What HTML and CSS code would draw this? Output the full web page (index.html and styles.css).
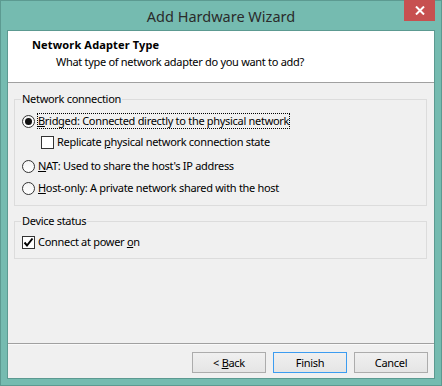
FILE: index.html
```html
<!DOCTYPE html>
<html lang="en">
<head>
    <meta charset="UTF-8">
    <title>Add Hardware Wizard</title>
    <link rel="stylesheet" href="styles.css">
</head>
<body>
    <div class="window">
        <div class="titlebar">
            <div class="title">Add Hardware Wizard</div>
            <button class="close" aria-label="Close">
                <svg width="10" height="9" viewBox="0 0 10 9">
                    <path d="M1 0.5 L9 8.5 M9 0.5 L1 8.5" stroke="#fff" stroke-width="2"/>
                </svg>
            </button>
        </div>

        <div class="client">
            <div class="header">
                <div class="heading">Network Adapter Type</div>
                <div class="subheading">What type of network adapter do you want to add?</div>
            </div>

            <div class="content">
                <fieldset class="group">
                    <legend>Network connection</legend>
                    <div class="option row-bridged">
                        <span class="radio checked"></span>
                        <span class="label focused"><u>B</u>ridged: Connected directly to the physical network</span>
                    </div>
                    <div class="option sub row-replicate">
                        <span class="check"></span>
                        <span class="label">Replicate <u>p</u>hysical network connection state</span>
                    </div>
                    <div class="option row-nat">
                        <span class="radio"></span>
                        <span class="label"><u>N</u>AT: Used to share the host's IP address</span>
                    </div>
                    <div class="option row-host">
                        <span class="radio"></span>
                        <span class="label"><u>H</u>ost-only: A private network shared with the host</span>
                    </div>
                </fieldset>

                <fieldset class="group group-device">
                    <legend>Device status</legend>
                    <div class="option row-power">
                        <span class="check checked">
                            <svg width="11" height="11" viewBox="0 0 11 11">
                                <path d="M1.5 5.5 L4 8.5 L9.5 1.5" fill="none" stroke="#000" stroke-width="2"/>
                            </svg>
                        </span>
                        <span class="label">Connect at power <u>o</u>n</span>
                    </div>
                </fieldset>
            </div>

            <div class="footer">
                <button class="btn">&lt; <u>B</u>ack</button>
                <button class="btn default">Finish</button>
                <button class="btn">Cancel</button>
            </div>
        </div>
    </div>
</body>
</html>
```

FILE: styles.css
```css
:root {
    --frame: #75bbb0;
    --frame-edge: #5c9a91;
    --panel: #f0f0f0;
    --group-border: #dcdcdc;
    --separator: #a0a0a0;
    --text: #000;
}

* {
    margin: 0;
    padding: 0;
    box-sizing: border-box;
}

body {
    font-family: 'Noto Sans', 'Open Sans', sans-serif;
    font-size: 11px;
    letter-spacing: -0.3px;
    color: var(--text);
    background: #fff;
}

.window {
    position: relative;
    width: 442px;
    height: 386px;
    background-color: var(--frame);
    border: 1px solid var(--frame-edge);
    padding: 0 6px 6px;
    display: flex;
    flex-direction: column;
}

.titlebar {
    height: 29px;
    display: flex;
    align-items: center;
    justify-content: center;
}

.title {
    font-size: 14.5px;
    letter-spacing: 0;
    color: #2b2b2b;
    margin-top: 1px;
}

.close {
    position: absolute;
    top: -1px;
    right: 6px;
    width: 31px;
    height: 21px;
    border: none;
    background-color: #c75050;
    display: flex;
    align-items: center;
    justify-content: center;
}

.client {
    flex: 1;
    border: 1px solid var(--frame-edge);
    background-color: var(--panel);
    display: flex;
    flex-direction: column;
}

.header {
    height: 52px;
    background-color: #fff;
    border-bottom: 1px solid var(--separator);
    padding: 6px 0 0 24px;
}

.heading {
    font-weight: 700;
    letter-spacing: 0.15px;
    line-height: 16px;
}

.subheading {
    line-height: 16px;
    margin-top: 1px;
    padding-left: 24px;
}

.content {
    height: 260px;
    padding: 8px 7px 0 6px;
}

.group {
    border: 1px solid var(--group-border);
    padding: 6px 0 9px 7px;
    min-width: 0;
}

.group legend {
    line-height: 16px;
    padding: 0 1px;
    margin-left: -1px;
}

.group-device {
    margin-top: 7px;
    padding-top: 5px;
    padding-bottom: 8px;
}

.option {
    display: flex;
    align-items: center;
    height: 16px;
    line-height: 16px;
    white-space: nowrap;
}

.option.sub {
    padding-left: 19px;
}

.row-replicate {
    margin-top: 5px;
}

.row-nat {
    margin-top: 8px;
}

.row-host {
    margin-top: 6px;
}

.radio {
    width: 13px;
    height: 13px;
    border: 1px solid #333;
    border-radius: 50%;
    background: linear-gradient(#f4f4f4, #ffffff);
    margin-right: 2px;
    display: flex;
    align-items: center;
    justify-content: center;
    flex-shrink: 0;
}

.radio.checked::after {
    content: '';
    width: 7px;
    height: 7px;
    border-radius: 50%;
    background-color: #111;
}

.check {
    width: 13px;
    height: 13px;
    border: 1px solid #333;
    background-color: #fff;
    margin-right: 2px;
    display: flex;
    align-items: center;
    justify-content: center;
    flex-shrink: 0;
}

.label {
    padding: 0 1px;
}

.label.focused {
    outline: 1px dotted #000;
    outline-offset: -1px;
}

.footer {
    flex: 1;
    border-top: 1px solid var(--separator);
    box-shadow: inset 0 1px 0 #f9f9f9;
    display: flex;
    justify-content: flex-end;
    gap: 7px;
    padding: 8px 6px 0 0;
}

.btn {
    width: 74px;
    height: 21px;
    font-family: inherit;
    font-size: 11px;
    letter-spacing: -0.3px;
    color: var(--text);
    border: 1px solid #acacac;
    background: linear-gradient(#f0f0f0, #e5e5e5);
}

.btn.default {
    border-color: #3c9cf0;
}
```
